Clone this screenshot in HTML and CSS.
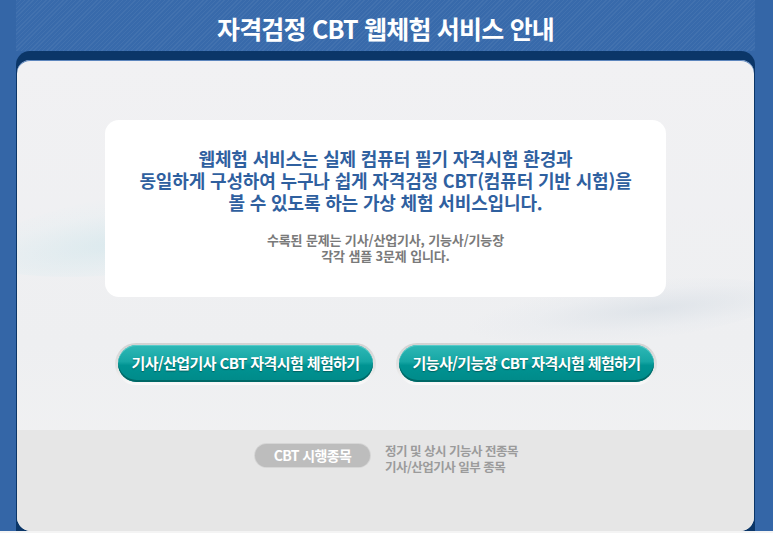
FILE: index.html
```html
<!DOCTYPE html>
<html lang="ko">
<head>
<meta charset="utf-8">
<title>자격검정 CBT 웹체험 서비스 안내</title>
<link rel="stylesheet" href="styles.css">
</head>
<body>
<div class="page">
  <div class="frame">
    <header class="header">
      <h1 class="title">자격검정 CBT 웹체험 서비스 안내</h1>
    </header>
    <div class="band">
      <main class="panel">
        <div class="swoosh swoosh-left"></div>
        <div class="swoosh swoosh-right"></div>
        <section class="info">
          <p class="lead">웹체험 서비스는 실제 컴퓨터 필기 자격시험 환경과<br>동일하게 구성하여 누구나 쉽게 자격검정 CBT(컴퓨터 기반 시험)을<br>볼 수 있도록 하는 가상 체험 서비스입니다.</p>
          <p class="note">수록된 문제는 기사/산업기사, 기능사/기능장<br>각각 샘플 3문제 입니다.</p>
        </section>
        <div class="actions">
          <a class="btn" href="#"><span class="btn-inner">기사/산업기사 CBT 자격시험 체험하기</span></a>
          <a class="btn" href="#"><span class="btn-inner">기능사/기능장 CBT 자격시험 체험하기</span></a>
        </div>
        <footer class="footer">
          <span class="badge">CBT 시행종목</span>
          <p class="footer-text">정기 및 상시 기능사 전종목<br>기사/산업기사 일부 종목</p>
        </footer>
      </main>
    </div>
  </div>
</div>
</body>
</html>
```
FILE: styles.css
```css
* { box-sizing: border-box; }
html, body { margin: 0; padding: 0; }
body {
  background: #f4f4f4;
  font-family: "Noto Sans CJK KR", "Noto Sans", sans-serif;
  width: 773px;
  height: 533px;
  overflow: hidden;
}
.page {
  width: 773px;
  height: 531px;
  background: #3466a7;
  padding-left: 16px;
}
.frame {
  width: 739px;
}
.header {
  height: 51px;
  background-color: #386aab;
  background-image: repeating-linear-gradient(135deg, rgba(255,255,255,0.05) 0 1px, rgba(0,0,0,0) 1px 3px);
  display: flex;
  align-items: center;
  justify-content: center;
  padding-top: 4px;
}
.title {
  margin: 0;
  color: #ffffff;
  font-size: 25px;
  line-height: 30px;
  font-weight: 700;
  letter-spacing: -0.8px;
}
.band {
  background: #0b3668;
  border-radius: 14px 14px 0 0;
  padding: 9px 1px 0 1px;
}
.panel {
  position: relative;
  height: 471px;
  border-radius: 13px 13px 14px 14px;
  overflow: hidden;
  background: linear-gradient(180deg, #f1f1f3 0%, #eeeff1 60%, #f2f2f3 100%);
  box-shadow: inset 0 1px 0 #5d86bd;
  padding-top: 60px;
  display: flex;
  flex-direction: column;
  align-items: center;
}
.swoosh {
  position: absolute;
  pointer-events: none;
}
.swoosh-left {
  left: -40px;
  top: 130px;
  width: 360px;
  height: 80px;
  border-radius: 50%;
  background: radial-gradient(ellipse at 40% 60%, rgba(195,226,233,0.45) 0%, rgba(220,238,242,0.2) 45%, rgba(240,240,242,0) 70%);
  transform: rotate(-8deg);
}
.swoosh-right {
  right: -30px;
  top: 222px;
  width: 320px;
  height: 60px;
  border-radius: 50%;
  background: radial-gradient(ellipse at 60% 50%, rgba(210,218,226,0.55) 0%, rgba(225,230,236,0.25) 45%, rgba(240,240,242,0) 70%);
  transform: rotate(-6deg);
}
.info {
  position: relative;
  width: 561px;
  height: 177px;
  background: #ffffff;
  border-radius: 14px;
  padding-top: 27px;
  text-align: center;
}
.lead {
  margin: 0;
  color: #2f609f;
  font-size: 18px;
  line-height: 22px;
  font-weight: 700;
  letter-spacing: -0.15px;
}
.note {
  margin: 19px 0 0;
  color: #7a7a7a;
  font-size: 13px;
  line-height: 16px;
  font-weight: 700;
  letter-spacing: -0.15px;
}
.actions {
  position: relative;
  margin-top: 46px;
  display: flex;
  gap: 20px;
  padding-left: 1px;
}
.btn {
  display: block;
  width: 261px;
  height: 42px;
  padding: 2px 3px 3px;
  border-radius: 21px;
  background: linear-gradient(180deg, #d2d2d2 0%, #e4e4e4 60%, #fafafa 100%);
  text-decoration: none;
}
.btn-inner {
  display: flex;
  align-items: center;
  justify-content: center;
  height: 100%;
  border-radius: 19px;
  background: linear-gradient(180deg, #2fb8b6 0%, #16a6a4 45%, #009392 55%, #008a89 100%);
  box-shadow: inset 0 -2px 0 #006866, inset 0 1px 0 #58cbc9;
  color: #ffffff;
  font-size: 15px;
  font-weight: 700;
  letter-spacing: -0.6px;
  line-height: 20px;
  padding-bottom: 1px;
  text-shadow: 0 1px 1px rgba(0,60,60,0.55);
}
.footer {
  margin-top: auto;
  align-self: stretch;
  height: 101px;
  background: #e6e6e6;
  display: flex;
  justify-content: center;
  align-items: flex-start;
  gap: 15px;
  padding-top: 14px;
  padding-left: 2px;
}
.badge {
  width: 115px;
  height: 23px;
  border-radius: 12px;
  background: #bdbdbd;
  box-shadow: 0 0 0 1px #d6d6d6;
  color: #ffffff;
  font-size: 14px;
  font-weight: 700;
  letter-spacing: -0.6px;
  line-height: 23px;
  text-align: center;
}
.footer-text {
  margin: -1px 0 0;
  color: #9b9b9b;
  font-size: 12.5px;
  line-height: 16px;
  font-weight: 700;
  letter-spacing: -0.5px;
}
```
